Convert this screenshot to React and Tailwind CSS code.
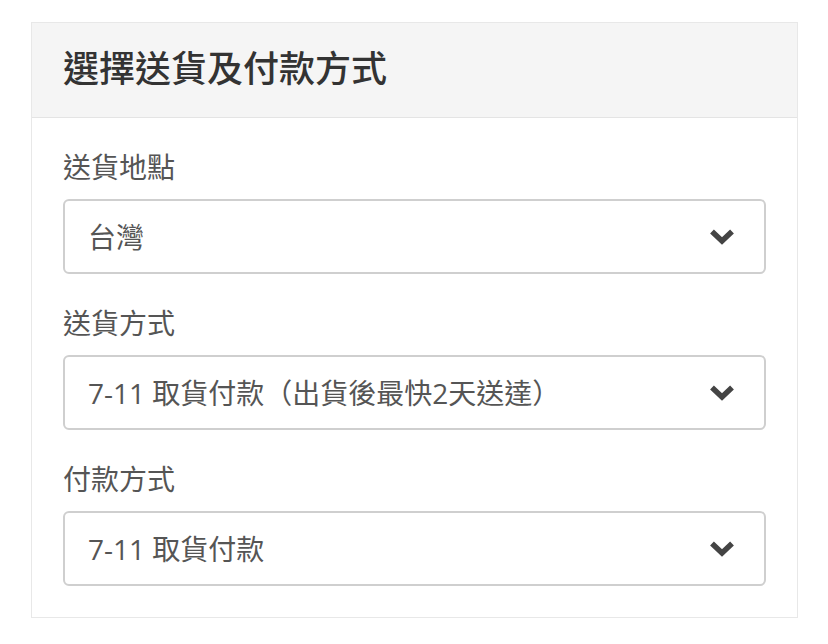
import React from 'react'

const font = { fontFamily: '"Open Sans", "Noto Sans CJK TC", sans-serif' }

function Chevron() {
  return (
    <svg width="26" height="18" viewBox="0 0 26 18" className="shrink-0">
      <path d="M3 3.5 L13 13 L23 3.5" fill="none" stroke="#444" strokeWidth="5.5" strokeLinejoin="miter" />
    </svg>
  )
}

function Field({ label, value }) {
  return (
    <div>
      <div className="text-[28px] leading-[40px] text-[#555] mb-[12px]">{label}</div>
      <div className="h-[75px] border-2 border-[#cfcfcf] rounded-[6px] flex items-center justify-between pl-[23px] pr-[29px] bg-white">
        <span className="text-[28px] text-[#555]">{value}</span>
        <Chevron />
      </div>
    </div>
  )
}

export default function App() {
  return (
    <div className="min-h-[644px] bg-white pt-[22px] pl-[31px]" style={font}>
      <div className="w-[767px] border border-[#e8e8e8]">
        <div className="h-[95px] bg-[#f5f5f5] border-b border-[#e4e4e4] flex items-center px-[31px]">
          <h1 className="text-[36px] font-medium text-[#333] leading-none -mt-[2px]">選擇送貨及付款方式</h1>
        </div>
        <div className="px-[31px] pt-[29px] pb-[31px] flex flex-col gap-[29px]">
          <Field label="送貨地點" value="台灣" />
          <Field label="送貨方式" value="7-11 取貨付款（出貨後最快2天送達）" />
          <Field label="付款方式" value="7-11 取貨付款" />
        </div>
      </div>
    </div>
  )
}
